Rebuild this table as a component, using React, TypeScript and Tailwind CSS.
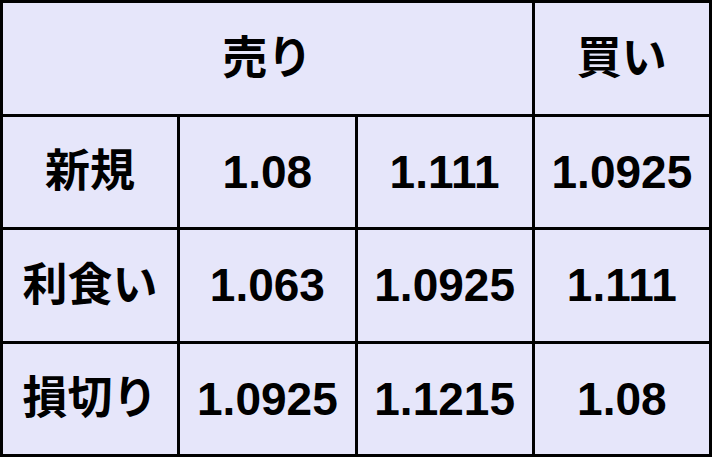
import { Fragment } from "react"

const rows = [
  { label: "新規", values: ["1.08", "1.111", "1.0925"] },
  { label: "利食い", values: ["1.063", "1.0925", "1.111"] },
  { label: "損切り", values: ["1.0925", "1.1215", "1.08"] },
]

function Cell({ children, jp = false, className = "" }: { children: React.ReactNode; jp?: boolean; className?: string }) {
  return (
    <div
      className={`flex items-center justify-center bg-[#e6e6fa] ${jp ? "text-[45px] font-semibold" : "text-[46px] font-bold"} ${className}`}
    >
      {children}
    </div>
  )
}

export default function App() {
  return (
    <div
      className="grid h-[457px] w-[712px] grid-cols-4 grid-rows-4 gap-[3px] bg-black p-[3px] leading-none text-black"
      style={{ fontFamily: '"Liberation Sans", "Noto Sans CJK JP", sans-serif' }}
    >
      <Cell jp className="col-span-3">売り</Cell>
      <Cell jp>買い</Cell>
      {rows.map((row) => (
        <Fragment key={row.label}>
          <Cell jp>{row.label}</Cell>
          {row.values.map((v, i) => (
            <Cell key={i}>{v}</Cell>
          ))}
        </Fragment>
      ))}
    </div>
  )
}
